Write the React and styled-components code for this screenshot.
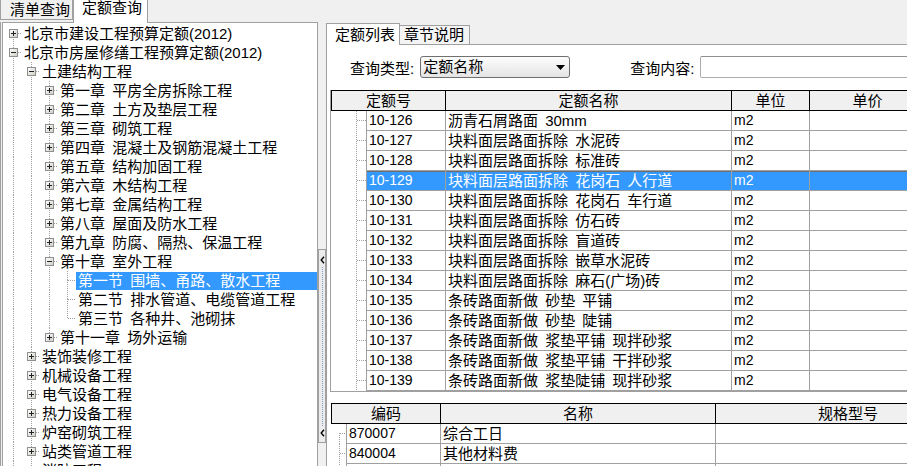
import React from 'react';
import styled, { createGlobalStyle, css } from 'styled-components';

const GlobalStyle = createGlobalStyle`
  html, body {
    margin: 0;
    padding: 0;
    background: #f0f0f0;
  }
  body {
    font-family: "Liberation Sans", "Noto Sans CJK SC", sans-serif;
    font-size: 15px;
    color: #000;
    word-spacing: 3px;
  }
`;

// dotted tree connector lines, drawn as background layers
const dot = (dir) => `repeating-linear-gradient(${dir}, #a0a0a0 0 1px, transparent 1px 2px)`;
const treeLines = ({ $cx, $cy, $through, $up, $down, $branch }) => {
  const out = [];
  if ($through) out.push(`${dot('to bottom')} ${$cx}px 0 / 1px 100% no-repeat`);
  if ($up) out.push(`${dot('to bottom')} ${$cx}px 0 / 1px ${$cy}px no-repeat`);
  if ($down) out.push(`${dot('to bottom')} ${$cx}px ${$cy}px / 1px calc(100% - ${$cy}px) no-repeat`);
  if ($branch) out.push(`${dot('to right')} ${$cx + 1}px ${$cy}px / calc(100% - ${$cx + 1}px) 1px no-repeat`);
  return out.length ? out.join(', ') : 'none';
};

const Window = styled.div`
  width: 907px;
  height: 466px;
  overflow: hidden;
  display: flex;
  flex-direction: column;
  background: #f0f0f0;
`;

const TopTabs = styled.div`
  display: flex;
  height: 22px;
  flex-shrink: 0;
`;

const TopTab = styled.div`
  box-sizing: border-box;
  width: ${(p) => (p.$active ? 75 : 73)}px;
  height: ${(p) => (p.$active ? 23 : 20)}px;
  margin-bottom: ${(p) => (p.$active ? -1 : 0)}px;
  padding: ${(p) => (p.$active ? '0 0 0 8px' : '1px 0 0 9px')};
  line-height: ${(p) => (p.$active ? 16 : 18)}px;
  border: 1px solid #a0a0a0;
  border-top: none;
  ${(p) => p.$active && css`border-bottom: none;`}
  background: ${(p) => (p.$active ? '#fff' : '#f0f0f0')};
  position: relative;
  z-index: ${(p) => (p.$active ? 1 : 0)};
  white-space: nowrap;
`;

const Body = styled.div`
  flex: 1;
  min-height: 0;
  display: flex;
  border-left: 1px solid #a0a0a0;
`;

const LeftPane = styled.div`
  box-sizing: border-box;
  width: 316px;
  margin-left: 1px;
  flex-shrink: 0;
  padding-top: 1px;
  background: #fff;
  border: 1px solid #a0a0a0;
  border-bottom: none;
  overflow: hidden;
`;

const TreeRow = styled.div`
  display: flex;
  height: 19px;
  padding-left: 1px;
`;

const Guide = styled.span`
  width: 18px;
  height: 19px;
  flex-shrink: 0;
  display: flex;
  align-items: center;
  background: ${treeLines};
`;

const ExpBox = styled.svg`
  display: block;
  margin-left: 5px;
`;

const TreeLabel = styled.span`
  padding: 0 2px;
  line-height: 19px;
  white-space: nowrap;
  ${(p) => p.$sel && css`
    flex: 1;
    height: 18px;
    line-height: 18px;
    margin-top: 1px;
    background: #3399ff;
    color: #fff;
  `}
`;

const Splitter = styled.div`
  width: 8px;
  flex-shrink: 0;
  display: flex;
  flex-direction: column;
`;

const SplitHandle = styled.div`
  box-sizing: border-box;
  margin-top: 227px;
  height: 194px;
  border: 1px solid #a0a0a0;
  background: #ececec;
  display: flex;
  flex-direction: column;
  align-items: center;
  padding: 6px 0 5px;
`;

const SplitDots = styled.div`
  flex: 1;
  margin: 3px 0;
  border-left: 1px dotted #7f9ccf;
`;

const RightPanel = styled.div`
  flex: 1;
  min-width: 0;
  margin-top: 1px;
  display: flex;
  flex-direction: column;
  overflow: hidden;
`;

const PageTabs = styled.div`
  display: flex;
  align-items: flex-end;
  height: 22px;
  flex-shrink: 0;
`;

const PageTab = styled.div`
  box-sizing: border-box;
  width: ${(p) => (p.$active ? 74 : 70)}px;
  height: ${(p) => (p.$active ? 22 : 20)}px;
  padding-left: ${(p) => (p.$active ? 8 : 4)}px;
  line-height: ${(p) => (p.$active ? 21 : 18)}px;
  border: 1px solid #a0a0a0;
  ${(p) => (p.$active ? css`border-bottom: none;` : css`border-left: none;`)}
  background: ${(p) => (p.$active ? '#fff' : '#f4f4f4')};
  white-space: nowrap;
`;

const TabFill = styled.div`
  flex: 1;
  align-self: stretch;
  border-bottom: 1px solid #a0a0a0;
`;

const Page = styled.div`
  flex: 1;
  min-height: 0;
  background: #fff;
  border-left: 1px solid #a0a0a0;
  padding-left: 3px;
  overflow: hidden;
`;

const QueryRow = styled.div`
  display: flex;
  align-items: center;
  height: 22px;
  margin-top: 11px;
  padding-left: 20px;
`;

const QueryLabel = styled.span`
  margin-left: ${(p) => p.$gap || 0}px;
  margin-right: 6px;
  white-space: nowrap;
`;

const Select = styled.div`
  box-sizing: border-box;
  width: 150px;
  height: 22px;
  display: flex;
  align-items: center;
  padding: 0 4px 0 2px;
  border: 1px solid #707070;
  border-radius: 3px;
  background: linear-gradient(to bottom, #fdfdfd, #e4e4e4);
  line-height: 20px;
  flex-shrink: 0;

  svg {
    margin-left: auto;
  }
`;

const TextInput = styled.div`
  box-sizing: border-box;
  width: 240px;
  height: 22px;
  flex-shrink: 0;
  border: 1px solid #abadb3;
  border-top-color: #8e8f8f;
  border-radius: 2px;
  background: #fff;
`;

const Grid = styled.div`
  width: ${(p) => p.$w}px;
  margin-top: ${(p) => p.$mt}px;
  margin-left: ${(p) => p.$ml || 0}px;
  ${(p) => p.$framed && css`
    border-left: 1px solid #a0a0a0;
    border-bottom: 1px solid #a0a0a0;
  `}
`;

const GridHead = styled.div`
  display: grid;
  grid-template-columns: ${(p) => p.$cols};
  height: 21px;
  box-sizing: border-box;
  border-top: 1px solid #000;
  border-bottom: 1px solid #000;
  background: #f0f0f0;
`;

const HeadCell = styled.div`
  border-left: 1px solid #000;
  text-align: center;
  line-height: 19px;
  white-space: nowrap;
  overflow: hidden;
`;

const GridRow = styled.div`
  display: grid;
  grid-template-columns: ${(p) => p.$cols};
  height: 20px;
`;

const Gutter = styled.div`
  background: ${treeLines};
`;

const Cell = styled.div`
  box-sizing: border-box;
  border-left: 1px solid #a0a0a0;
  border-bottom: 1px solid #a0a0a0;
  padding-left: 2px;
  line-height: 19px;
  white-space: nowrap;
  overflow: hidden;
  ${(p) => p.$code && css`
    font-family: "Liberation Sans", sans-serif;
    font-size: 14px;
  `}
  ${(p) => p.$sel && css`
    background: #3399ff;
    color: #fff;
    box-shadow: inset 0 1px 0 #6f6f6f;
  `}
`;

const Expander = ({ open }) => (
  <ExpBox width="9" height="9" viewBox="0 0 9 9">
    <defs>
      <linearGradient id="expFill" x1="0" y1="0" x2="1" y2="1">
        <stop offset="0" stopColor="#ffffff" />
        <stop offset="1" stopColor="#cfcfc6" />
      </linearGradient>
    </defs>
    <rect x="0.5" y="0.5" width="8" height="8" fill="url(#expFill)" stroke="#8f8f8f" />
    <path d="M2 4.5h5" stroke="#222" />
    {!open && <path d="M4.5 2v5" stroke="#222" />}
  </ExpBox>
);

const Chevron = () => (
  <svg width="5" height="8" viewBox="0 0 5 8">
    <path d="M4 0.8 L1.2 4 L4 7.2" fill="none" stroke="#000" strokeWidth="1.4" />
  </svg>
);

const tree = [
  { t: '北京市建设工程预算定额(2012)', d: 0, exp: '+', first: true },
  { t: '北京市房屋修缮工程预算定额(2012)', d: 0, exp: '-' },
  { t: '土建结构工程', d: 1, exp: '-' },
  { t: '第一章 平房全房拆除工程', d: 2, exp: '+' },
  { t: '第二章 土方及垫层工程', d: 2, exp: '+' },
  { t: '第三章 砌筑工程', d: 2, exp: '+' },
  { t: '第四章 混凝土及钢筋混凝土工程', d: 2, exp: '+' },
  { t: '第五章 结构加固工程', d: 2, exp: '+' },
  { t: '第六章 木结构工程', d: 2, exp: '+' },
  { t: '第七章 金属结构工程', d: 2, exp: '+' },
  { t: '第八章 屋面及防水工程', d: 2, exp: '+' },
  { t: '第九章 防腐、隔热、保温工程', d: 2, exp: '+' },
  { t: '第十章 室外工程', d: 2, exp: '-' },
  { t: '第一节 围墙、甬路、散水工程', d: 3, sel: true },
  { t: '第二节 排水管道、电缆管道工程', d: 3 },
  { t: '第三节 各种井、池砌抹', d: 3, last: true },
  { t: '第十一章 场外运输', d: 2, exp: '+', last: true },
  { t: '装饰装修工程', d: 1, exp: '+' },
  { t: '机械设备工程', d: 1, exp: '+' },
  { t: '电气设备工程', d: 1, exp: '+' },
  { t: '热力设备工程', d: 1, exp: '+' },
  { t: '炉窑砌筑工程', d: 1, exp: '+' },
  { t: '站类管道工程', d: 1, exp: '+' },
  { t: '消防工程', d: 1, exp: '+' },
];

// which ancestor levels still have siblings below -> vertical guide
const lastAt = [];
const treeRows = tree.map((item) => {
  const guides = [];
  for (let k = 0; k < item.d; k++) guides.push(!lastAt[k]);
  lastAt[item.d] = !!item.last;
  return { ...item, guides };
});

const quotas = [
  ['10-126', '沥青石屑路面 30mm'],
  ['10-127', '块料面层路面拆除 水泥砖'],
  ['10-128', '块料面层路面拆除 标准砖'],
  ['10-129', '块料面层路面拆除 花岗石 人行道'],
  ['10-130', '块料面层路面拆除 花岗石 车行道'],
  ['10-131', '块料面层路面拆除 仿石砖'],
  ['10-132', '块料面层路面拆除 盲道砖'],
  ['10-133', '块料面层路面拆除 嵌草水泥砖'],
  ['10-134', '块料面层路面拆除 麻石(广场)砖'],
  ['10-135', '条砖路面新做 砂垫 平铺'],
  ['10-136', '条砖路面新做 砂垫 陡铺'],
  ['10-137', '条砖路面新做 浆垫平铺 现拌砂浆'],
  ['10-138', '条砖路面新做 浆垫平铺 干拌砂浆'],
  ['10-139', '条砖路面新做 浆垫陡铺 现拌砂浆'],
];
const SELECTED = '10-129';

const materials = [
  ['870007', '综合工日'],
  ['840004', '其他材料费'],
  ['', ''],
];

const UPPER_HEAD = '114px 286px 78px 116px';
const UPPER_BODY = '35px 79px 286px 78px 116px';
const LOWER_HEAD = '109px 275px 265px';
const LOWER_BODY = '15px 94px 275px 265px';

const App = () => {
  return (
    <Window>
      <GlobalStyle />
      <TopTabs>
        <TopTab>清单查询</TopTab>
        <TopTab $active>定额查询</TopTab>
      </TopTabs>
      <Body>
        <LeftPane>
          {treeRows.map((row) => (
            <TreeRow key={row.t}>
              {row.guides.map((g, i) => (
                <Guide key={i} $cx={9} $cy={9} $through={g} />
              ))}
              <Guide $cx={9} $cy={9} $up={!row.first} $down={!row.last} $branch>
                {row.exp && <Expander open={row.exp === '-'} />}
              </Guide>
              <TreeLabel $sel={row.sel}>{row.t}</TreeLabel>
            </TreeRow>
          ))}
        </LeftPane>
        <Splitter>
          <SplitHandle>
            <Chevron />
            <SplitDots />
            <Chevron />
          </SplitHandle>
        </Splitter>
        <RightPanel>
          <PageTabs>
            <PageTab $active>定额列表</PageTab>
            <PageTab>章节说明</PageTab>
            <TabFill />
          </PageTabs>
          <Page>
            <QueryRow>
              <QueryLabel>查询类型:</QueryLabel>
              <Select>
                定额名称
                <svg width="9" height="5" viewBox="0 0 9 5">
                  <path d="M0 0h9L4.5 5z" fill="#000" />
                </svg>
              </Select>
              <QueryLabel $gap={60}>查询内容:</QueryLabel>
              <TextInput />
            </QueryRow>

            <Grid $w={595} $mt={12} $framed>
              <GridHead $cols={UPPER_HEAD}>
                <HeadCell>定额号</HeadCell>
                <HeadCell>定额名称</HeadCell>
                <HeadCell>单位</HeadCell>
                <HeadCell>单价</HeadCell>
              </GridHead>
              {quotas.map(([code, name]) => {
                const sel = code === SELECTED;
                return (
                  <GridRow key={code} $cols={UPPER_BODY}>
                    <Gutter $cx={25} $cy={9} $through $branch />
                    <Cell $code $sel={sel}>{code}</Cell>
                    <Cell $sel={sel}>{name}</Cell>
                    <Cell $code $sel={sel}>m2</Cell>
                    <Cell $sel={sel} />
                  </GridRow>
                );
              })}
            </Grid>

            <Grid $w={650} $mt={11} $ml={1}>
              <GridHead $cols={LOWER_HEAD}>
                <HeadCell>编码</HeadCell>
                <HeadCell>名称</HeadCell>
                <HeadCell>规格型号</HeadCell>
              </GridHead>
              {materials.map(([code, name], i) => (
                <GridRow key={i} $cols={LOWER_BODY}>
                  <Gutter $cx={8} $cy={9} $through={i > 0} $down={i === 0} $branch />
                  <Cell $code>{code}</Cell>
                  <Cell>{name}</Cell>
                  <Cell />
                </GridRow>
              ))}
            </Grid>
          </Page>
        </RightPanel>
      </Body>
    </Window>
  );
};

export default App;
